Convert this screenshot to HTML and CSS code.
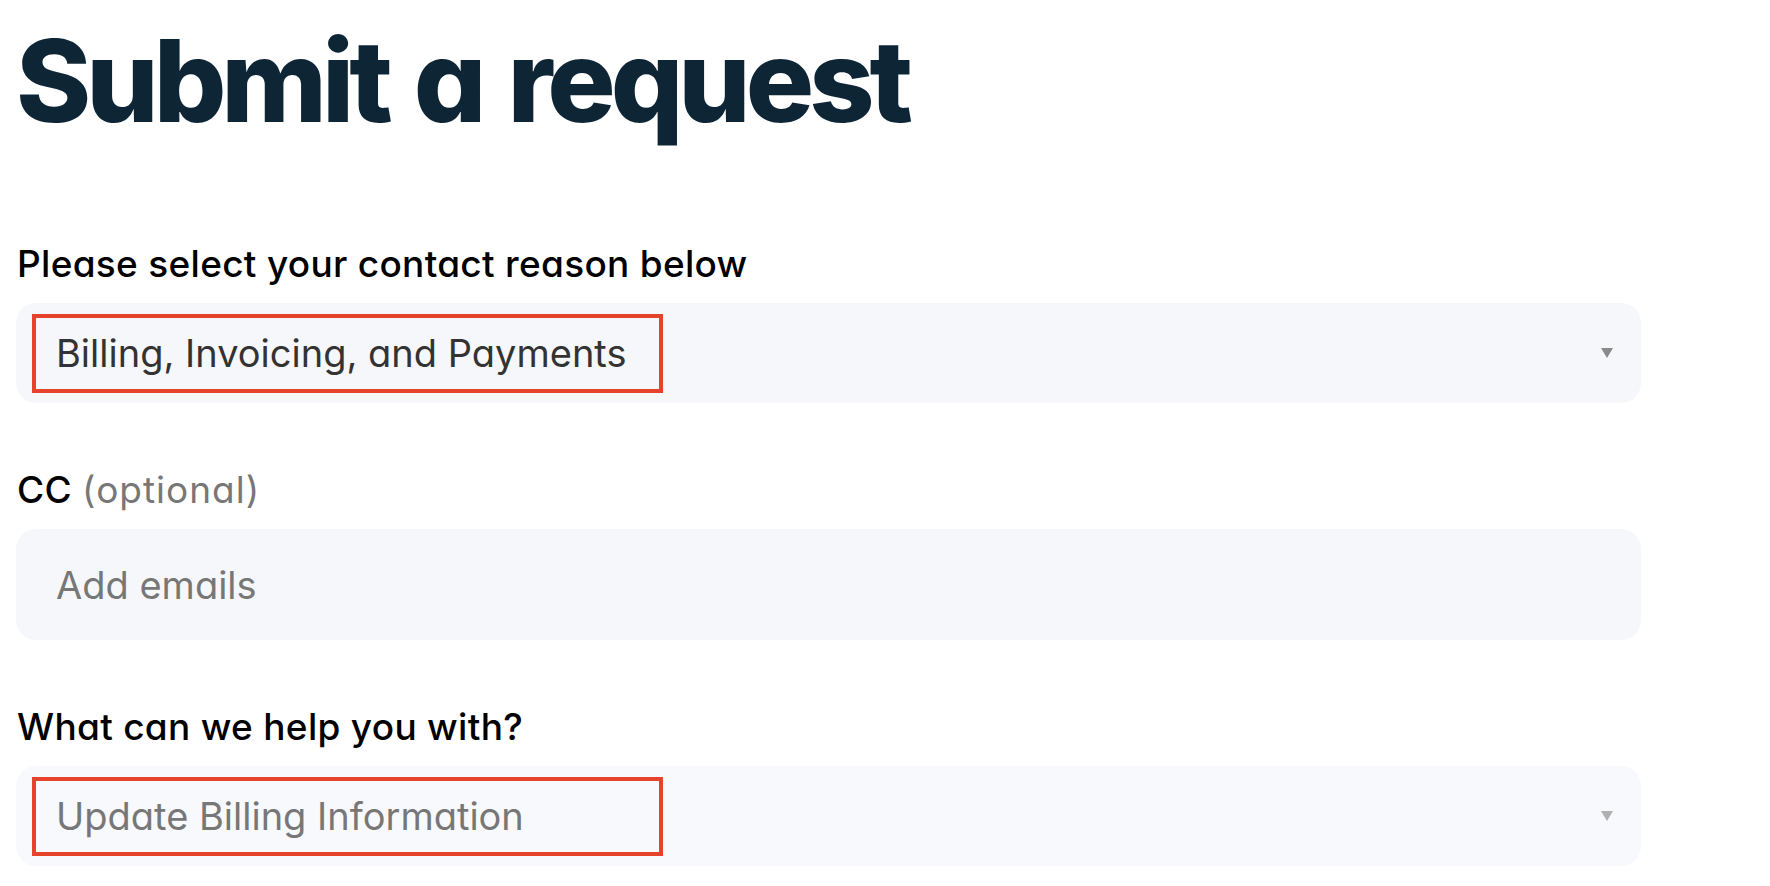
FILE: index.html
```html
<!DOCTYPE html>
<html lang="en">
<head>
    <meta charset="UTF-8">
    <meta name="viewport" content="width=device-width, initial-scale=1.0">
    <title>Submit a request</title>

    <link rel="stylesheet" href="styles.css">
</head>
<body>
    <main class="page">
        <h1 class="title">Submit a request</h1>

        <form class="request-form">
            <div class="field">
                <label class="field-label">Please select your contact reason below</label>
                <div class="select">
                    <span class="select-value marked">Billing, Invoicing, and Payments</span>
                    <span class="caret"></span>
                </div>
            </div>

            <div class="field">
                <label class="field-label">CC <span class="optional">(optional)</span></label>
                <div class="text-input">
                    <span class="placeholder">Add emails</span>
                </div>
            </div>

            <div class="field">
                <label class="field-label">What can we help you with?</label>
                <div class="select select-muted">
                    <span class="select-value marked placeholder">Update Billing Information</span>
                    <span class="caret"></span>
                </div>
            </div>
        </form>
    </main>
</body>
</html>
```

FILE: styles.css
```css
body {
    margin: 0;
    font-family: 'Inter', 'Noto Sans', sans-serif;
    font-feature-settings: "cv11";
    background-color: #fff;
    color: #000;
}

.page {
    width: 1625px;
    padding: 24px 0 0 16px;
}

.title {
    margin: 0;
    font-size: 114px;
    font-weight: 800;
    line-height: 1;
    letter-spacing: -5px;
    word-spacing: 6px;
    color: #0e2536;
}

.request-form {
    margin-top: 104px;
    display: flex;
    flex-direction: column;
    gap: 65px;
}

.field {
    display: flex;
    flex-direction: column;
    gap: 17px;
}

.field-label {
    font-size: 37px;
    font-weight: 500;
    line-height: 44px;
    letter-spacing: 0.3px;
    padding-left: 1px;
}

.optional {
    color: #777;
    font-weight: 400;
    letter-spacing: 1px;
}

.select,
.text-input {
    box-sizing: border-box;
    background-color: #f6f7fa;
    border-radius: 20px;
    display: flex;
    align-items: center;
}

.select {
    height: 100px;
    padding: 0 28px 0 16px;
    justify-content: space-between;
}

.select-muted {
    background-color: #f8f9fc;
}

.text-input {
    height: 111px;
    padding-left: 40px;
}

.select-value {
    font-size: 38px;
    font-weight: 400;
    color: #333;
}

.marked {
    box-sizing: border-box;
    width: 631px;
    height: 79px;
    border: 4px solid #e5432b;
    padding-left: 20px;
    display: flex;
    align-items: center;
}

.placeholder {
    font-size: 38px;
    font-weight: 400;
    color: #777;
}

.caret {
    width: 0;
    height: 0;
    border-left: 6px solid transparent;
    border-right: 6px solid transparent;
    border-top: 10px solid #8a8a8a;
}

.select-muted .caret {
    border-top-color: #b0b0b0;
}
```
